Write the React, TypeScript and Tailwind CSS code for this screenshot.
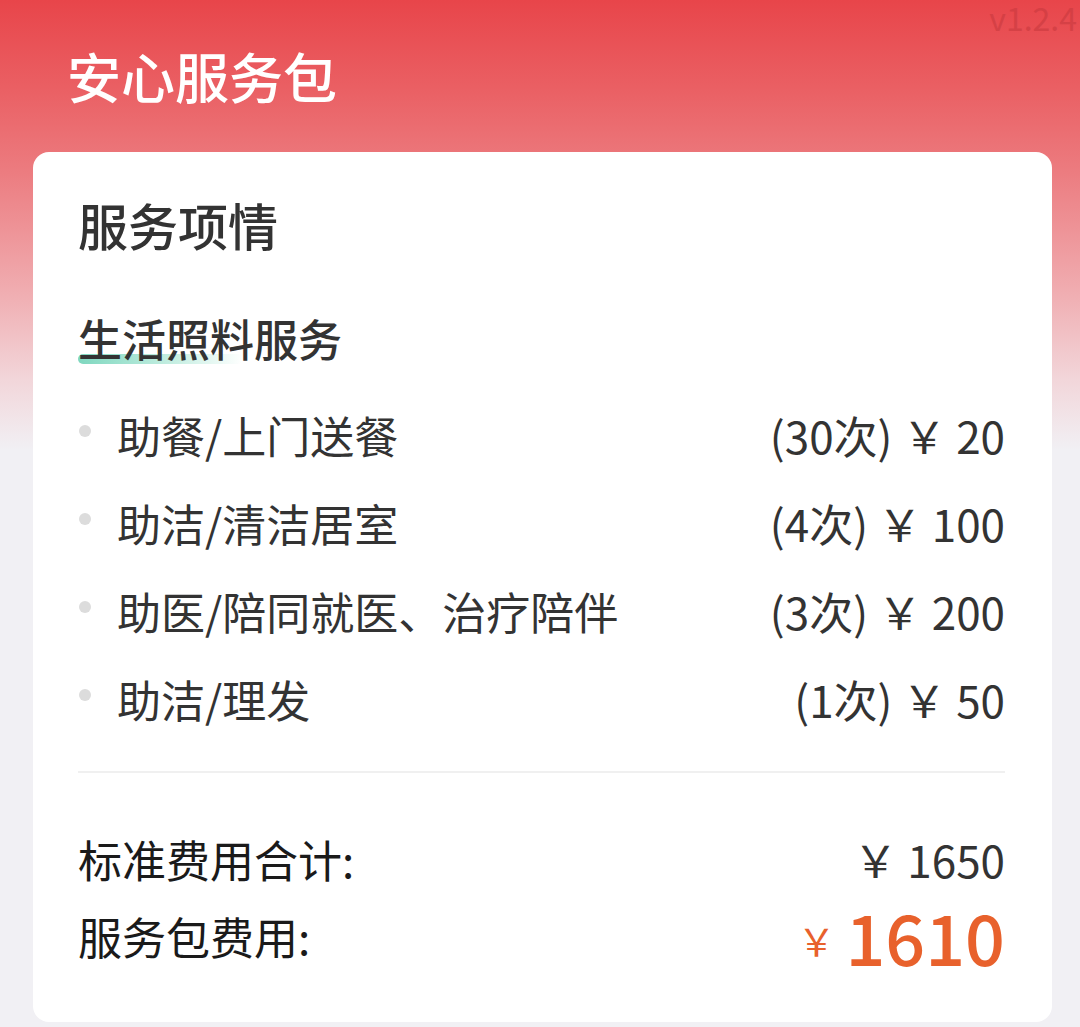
import React from "react";

const items = [
  { name: "助餐/上门送餐", count: "(30次)", price: "20" },
  { name: "助洁/清洁居室", count: "(4次)", price: "100" },
  { name: "助医/陪同就医、治疗陪伴", count: "(3次)", price: "200" },
  { name: "助洁/理发", count: "(1次)", price: "50" },
];

export default function App() {
  return (
    <div
      className="relative w-[1080px] h-[1027px] overflow-hidden bg-[linear-gradient(180deg,#e8454a_0px,#ea6064_90px,#ec7b7f_170px,#f0acb0_290px,#f2d6da_380px,#f1f0f4_450px,#f1f0f4_100%)]"
      style={{ fontFamily: '"Noto Sans CJK SC", "Noto Sans", sans-serif' }}
    >
      <div className="absolute right-[3px] top-0 text-[32px] leading-[34px] text-[#c93a3f] opacity-60">
        v1.2.4
      </div>
      <div className="h-[152px] pl-[67px] pt-[38px]">
        <div className="text-[54px] leading-[76px] text-white font-medium">安心服务包</div>
      </div>
      <div className="ml-[33px] w-[1019px] h-[870px] rounded-[16px] bg-white pl-[45px] pr-[47px] pt-[37px]">
        <div className="text-[50px] leading-[70px] text-[#333333] font-medium">服务项情</div>
        <div className="mt-[49px] relative inline-block">
          <div className="absolute left-0 top-[46px] h-[10px] w-[165px] rounded-[5px] bg-[linear-gradient(90deg,#7fd7bf,#c8efe3_60%,rgba(255,255,255,0))]" />
          <div className="relative text-[44px] leading-[60px] text-[#333333] font-medium">生活照料服务</div>
        </div>
        <div className="mt-[23px]">
          {items.map((it) => (
            <div key={it.name} className="flex h-[88px] items-center justify-between">
              <div className="flex items-center">
                <div className="ml-[1px] mr-[26px] h-[12px] w-[12px] -translate-y-[4px] rounded-full bg-[#dcdcdc]" />
                <span className="text-[44px] leading-[60px] text-[#333333]">{it.name}</span>
              </div>
              <div className="text-[44px] leading-[60px] text-[#333333]">
                {it.count} ￥ {it.price}
              </div>
            </div>
          ))}
        </div>
        <div className="mt-[28px] h-[2px] bg-[#f0f0f0]" />
        <div className="mt-[56px] flex h-[60px] items-center justify-between text-[#1a1a1a]">
          <span className="text-[44px] leading-[60px]">标准费用合计:</span>
          <span className="text-[44px] leading-[60px] text-[#333333]">￥ 1650</span>
        </div>
        <div className="flex h-[94px] items-center justify-between">
          <span className="text-[44px] leading-[60px] text-[#1a1a1a]">服务包费用:</span>
          <span className="flex items-center text-[#e8612c]">
            <span className="mr-[10px] mt-[8px] text-[38px] leading-none">￥</span>
            <span className="text-[70px] leading-none font-medium">1610</span>
          </span>
        </div>
      </div>
    </div>
  );
}
